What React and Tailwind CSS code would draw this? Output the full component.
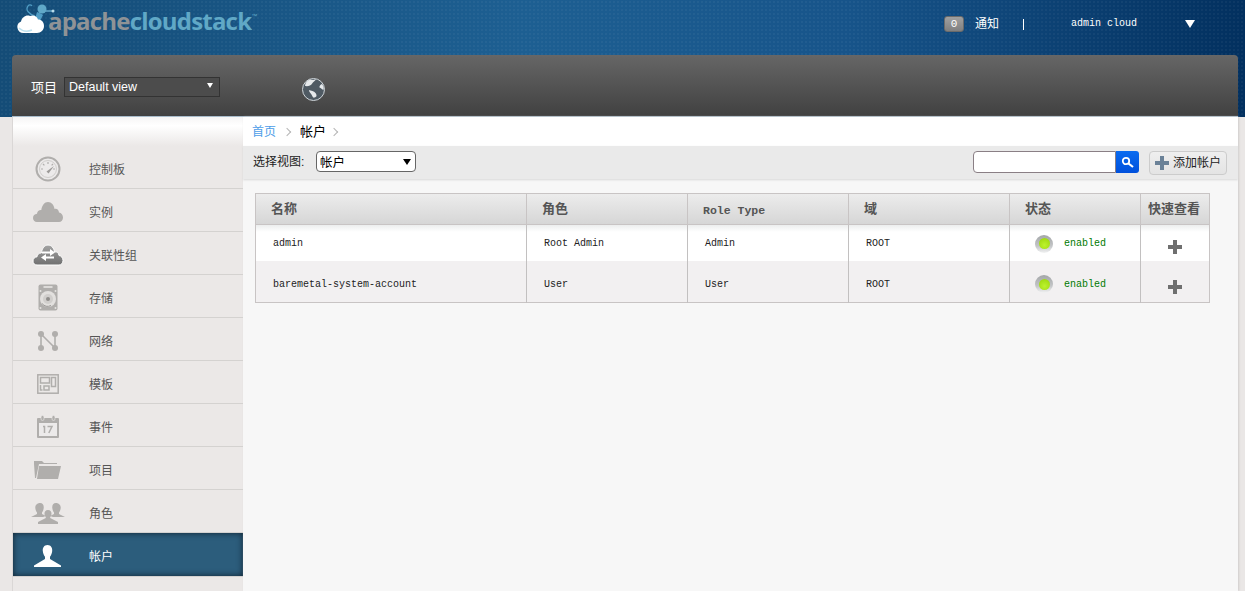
import React from "react";

const G = "#b0aeac";
const Gauge = () => (
  <svg width="26" height="26" viewBox="0 0 26 26">
    <circle cx="13" cy="13" r="11.500" fill="#eceaea" stroke={G} strokeWidth="2" />
    <circle cx="13" cy="13" r="8.500" fill="none" stroke="#d0cecc" strokeWidth="1" />
    <path d="M6 13h2M13 6v2M8 8l1.400 1.400M18 8l-1.400 1.400M20 13h-2" stroke={G} strokeWidth="1.200" />
    <path d="M11.500 15.500L19 10l-5.500 7.500z" fill="#9c9a98" />
  </svg>
);
const CLOUD = "M4 20C1.500 20 0 18.300 0 16c0-2.300 1.700-4 4-4.200C4.200 9.500 6 7.800 8.300 8 9 3.500 11.500 0 15 0c3.500 0 6 3.200 6.500 7 2.300-.8 4.300 1 4.500 3.500 2.400.3 4 2.500 4 5 0 2.500-1.600 4.500-4 4.500z";
const Cloud = () => (
  <svg width="30" height="20" viewBox="0 0 30 20"><path d={CLOUD} fill={G} /></svg>
);
const CloudSwap = () => (
  <svg width="32" height="22" viewBox="-1 -1 32 22">
    <defs>
      <linearGradient id="cs" x1="0" y1="0" x2="0" y2="1">
        <stop offset="0" stopColor="#a4a4a4" />
        <stop offset="1" stopColor="#707070" />
      </linearGradient>
    </defs>
    <path d={CLOUD} fill="url(#cs)" stroke="#fff" strokeWidth="1" />
    <path d="M9 6.500h8V4l5 3.500-5 3.500V8.500H9zM21 11.500h-8V9l-5 3.500 5 3.500v-2.500h8z" fill="#fff" />
  </svg>
);
const Disk = () => (
  <svg width="20" height="27" viewBox="0 0 20 27">
    <rect x="0.500" y="0.500" width="19" height="26" rx="2" fill={G} />
    <rect x="5.500" y="2" width="9" height="2" fill="#dcdad8" />
    <circle cx="2.500" cy="7" r="1" fill="#e4e2e0" /><circle cx="17.500" cy="7" r="1" fill="#e4e2e0" />
    <circle cx="2.500" cy="24" r="1" fill="#e4e2e0" /><circle cx="17.500" cy="24" r="1" fill="#e4e2e0" />
    <circle cx="10" cy="15" r="8" fill="#e2e0de" />
    <circle cx="10" cy="15" r="5" fill="#d0cecc" />
    <circle cx="10" cy="15" r="2" fill="#8f8d8b" />
    <path d="M4 19.500a7.500 7.500 0 0 0 9 2" stroke="#9a9896" fill="none" />
  </svg>
);
const Net = () => (
  <svg width="20" height="20" viewBox="0 0 20 20">
    <path d="M3 3v14M3 3l14 14M17 3v14" stroke={G} strokeWidth="1.600" fill="none" />
    <circle cx="3" cy="3" r="3" fill={G} /><circle cx="17" cy="3" r="3" fill={G} />
    <circle cx="3" cy="17" r="3" fill={G} /><circle cx="17" cy="17" r="3" fill={G} />
  </svg>
);
const Tpl = () => (
  <svg width="22" height="20" viewBox="0 0 22 20" fill="none" stroke={G} strokeWidth="1.500">
    <rect x="0.800" y="0.800" width="20.400" height="18.400" />
    <rect x="3.500" y="3.500" width="9" height="5.500" />
    <rect x="14.500" y="3.500" width="4" height="9" />
    <rect x="7" y="12" width="5" height="4" />
    <path d="M3.500 11v5h2" />
  </svg>
);
const Cal = () => (
  <svg width="22" height="23" viewBox="0 0 22 23">
    <path d="M1 3h20a1 1 0 0 1 1 1v18a1 1 0 0 1-1 1H1a1 1 0 0 1-1-1V4a1 1 0 0 1 1-1z" fill={G} />
    <rect x="2" y="8" width="18" height="13" fill="#eceaea" />
    <rect x="4" y="0.500" width="3" height="5" rx="1.500" fill={G} stroke="#eceaea" strokeWidth="0.600" />
    <rect x="15" y="0.500" width="3" height="5" rx="1.500" fill={G} stroke="#eceaea" strokeWidth="0.600" />
    <path d="M6 11.500h1.500V18M10.500 11.500H15L11.800 18" stroke={G} strokeWidth="1.500" fill="none" />
  </svg>
);
const Folder = () => (
  <svg width="27" height="18" viewBox="0 0 27 18">
    <path d="M0 0h8l2 2h13v1H5L2 17H1L0 3z" fill={G} />
    <path d="M5 5h22l-3 13H3z" fill={G} />
  </svg>
);
const Users = () => (
  <svg width="34" height="22" viewBox="0 0 34 22" fill={G}>
    <path d="M9 1c3 0 4 2.500 3.700 5-.2 2-1 3.500-1.700 4.500V12l4 2-3 1H0l6-3v-1.500C5.300 9.500 4.500 8 4.300 6 4 3.500 6 1 9 1z" />
    <path d="M25 1c3 0 5 2.500 4.700 5-.2 2-1 3.500-1.700 4.500V12l6 3H22l-3-1 4-2v-1.500c-.7-1-1.500-2.500-1.700-4.500C21 3.500 22 1 25 1z" />
    <path d="M17 8c2.500 0 3.700 2 3.500 4-.2 1.500-.8 2.500-1.300 3.200V16l7.800 4v2H7v-2l7.800-4v-.8c-.5-.7-1.100-1.700-1.300-3.200C13.300 10 14.500 8 17 8z" />
  </svg>
);
const User = () => (
  <svg width="27" height="22" viewBox="0 0 27 22" fill="#fff">
    <path d="M13.500 0c3.500 0 5 3 4.700 6-.2 2.500-1.200 4.500-2.200 5.700V14l11 6.500V22H0v-1.500L11 14v-2.300C10 10.500 9 8.500 8.800 6 8.500 3 10 0 13.500 0z" />
  </svg>
);
const Plus = ({ c = "#6f6f6f", s = 14 }) => (
  <svg width={s} height={s} viewBox="0 0 14 14"><path d="M5 0h4v5h5v4H9v5H5V9H0V5h5z" fill={c} /></svg>
);

const items = [
  ["控制板", <Gauge />],
  ["实例", <Cloud />],
  ["关联性组", <CloudSwap />],
  ["存储", <Disk />],
  ["网络", <Net />],
  ["模板", <Tpl />],
  ["事件", <Cal />],
  ["项目", <Folder />],
  ["角色", <Users />],
];

const rows = [
  ["admin", "Root Admin", "Admin"],
  ["baremetal-system-account", "User", "User"],
];

const Dot = () => (
  <span className="w-[18px] h-[18px] rounded-full bg-[linear-gradient(#a3a6a8,#c2c4c6_60%,#f2f3f3)] flex items-center justify-center">
    <span className="w-[11px] h-[11px] rounded-full bg-[radial-gradient(circle_at_50%_65%,#bdf22e,#98d40a)]" />
  </span>
);

const Row = ({ r, cls, h, pt, dotTop, plusTop }) => (
  <tr className={cls + " " + h}>
    <td className={"pl-[17px] border-r border-[#c2c0c0] align-top " + pt}>{r[0]}</td>
    <td className={"pl-[17px] border-r border-[#c2c0c0] align-top " + pt}>{r[1]}</td>
    <td className={"pl-[17px] border-r border-[#c2c0c0] align-top " + pt}>{r[2]}</td>
    <td className={"pl-[17px] border-r border-[#c2c0c0] align-top " + pt}>ROOT</td>
    <td className="border-r border-[#c2c0c0] align-middle">
      <div className={"flex items-center pl-[25px] gap-[11px] text-[#007a00] relative " + dotTop}>
        <Dot />
        <span>enabled</span>
      </div>
    </td>
    <td className="align-middle">
      <div className={"flex justify-center relative " + plusTop}><Plus /></div>
    </td>
  </tr>
);

export default function App() {
  return (
    <div className="w-[1245px] h-[591px] overflow-hidden bg-[#eae7e6] font-['Liberation_Sans','Noto_Sans_CJK_SC',sans-serif]">
      <header className="h-[117px] flex flex-col bg-[radial-gradient(#ffffff0a_1px,transparent_1.500px),linear-gradient(90deg,#144c77_0%,#1d5f92_42%,#17548a_68%,#02305f_100%)] bg-[length:4px_4px,100%_100%]">
        <div className="h-[55px] flex items-start">
          <div className="ml-[17px] mt-[3px] flex items-start">
            <svg width="38" height="31" viewBox="0 0 38 31">
              <path d="M18 13C12 11 8 7 11 3c1-1.500 3-1.500 4 0" stroke="#4f9cc4" strokeWidth="1.300" fill="none" />
              <path d="M28 8l7 0" stroke="#6fb4d4" strokeWidth="1.300" />
              <circle cx="36" cy="8" r="1.500" fill="#b8dcea" />
              <circle cx="25" cy="6" r="4.500" fill="#5fa8c8" />
              <path d="M20 9c3 1 5 2 6 3l-3 6-5-2z" fill="#4f9cc4" />
              <path d="M6.500 30a6 6 0 0 1-2.500-11.500C5 14.500 9 11.500 13 13c3-1.500 7 0 8 3.500 3.500 0 6 2.500 6 6.500s-3 7-7 7z" fill="#ffffff" />
              <path d="M2 25c3 3 8 4 13 2" stroke="#bfe2ef" strokeWidth="1.500" fill="none" />
            </svg>
            <span className="font-['Open_Sans'] font-bold text-[24px] leading-[32px] tracking-[-0.800px] -ml-[7px] mt-[2px] text-[#8f9396]">
              apache<span className="text-[#60a8c6]">cloudstack</span>
            </span>
            <span className="text-[6px] leading-[8px] mt-[9px] text-[#60a8c6]">™</span>
          </div>
          <div className="ml-auto flex items-start mt-[16px] mr-[50px]">
            <span className="w-[20px] h-[16px] rounded-[3px] bg-[linear-gradient(#a0a0a0,#808080)] border border-[#6a6a6a] text-white font-['Liberation_Mono'] text-[11px] leading-[14px] text-center">0</span>
            <span className="ml-[11px] text-[12px] leading-[16px] text-white">通知</span>
            <span className="ml-[24px] mt-[3px] w-px h-[11px] bg-white" />
            <span className="ml-[47px] font-['Liberation_Mono'] text-[10px] leading-[15px] text-white">admin cloud</span>
            <span className="ml-[48px] mt-[4px] w-0 h-0 border-x-[5px] border-x-transparent border-t-[8px] border-t-white" />
          </div>
        </div>
        <div className="h-[62px] ml-[12px] mr-[7px] rounded-t-[4px] bg-[linear-gradient(#666666,#414141)] border-b border-[#a9bccb] flex items-start pt-[22px] pl-[19px]">
          <span className="text-[13px] leading-[22px] text-white w-[33px]">项目</span>
          <div className="w-[156px] h-[20px] border border-[#333] bg-[#4c4c4c] flex items-center pl-[4px] pr-[6px]">
            <span className="text-[12.500px] leading-[20px] text-white">Default view</span>
            <span className="ml-auto -mt-[3px] w-0 h-0 border-x-[3px] border-x-transparent border-t-[5px] border-t-white" />
          </div>
          <span className="ml-[82px] mt-[1px]">
            <svg width="23" height="23" viewBox="0 0 23 23">
              <circle cx="11.500" cy="11.500" r="11" fill="#4f5a63" stroke="#cfd5d9" strokeWidth="1" />
              <path d="M8 1.500c2 1 4 0 6-.3-1 2-3 2.500-4 4.500S6 8.500 3 8c0-3 2-5.500 5-6.500zM20 6c1.500 2 2 4 1.500 6-1.500-.5-2.500-2-4-2.500-.5-1.500 1-3 2.500-3.500zM7 12c2 .5 5 1 6.500 3s1.500 4-1 4.500c-1 .5-2-.500-2.500-2-.5-2-3-3-3-5.500z" fill="#e6e9eb" />
            </svg>
          </span>
        </div>
      </header>

      <div className="flex ml-[12px] mr-[7px] h-[474px]">
        <nav className="w-[231px] shrink-0 bg-[#ebe8e7] border-l border-[#dad7d6] overflow-hidden">
          <div className="h-[29px] bg-[linear-gradient(#f6f5f5,#ffffff_30%,#ebe8e7)]" />
          {items.map(([t, ic]) => (
            <div key={t} className="flex items-center border-b border-[#d4d2d0] h-[43px]">
              <span className="w-[69px] flex justify-center mt-[3px]">{ic}</span>
              <span className="ml-[7px] text-[12px] leading-[16px] text-[#555] mt-[5px]">{t}</span>
            </div>
          ))}
          <div className="h-[43px] flex items-center bg-[#2c5d7c] shadow-[inset_0_0_6px_#10202e]">
            <span className="w-[69px] flex justify-center mt-[3px]"><User /></span>
            <span className="ml-[7px] text-[12px] leading-[16px] text-white mt-[5px]">帐户</span>
          </div>
          <div className="h-[40px] border-t border-[#d4d2d0]">
            <div className="w-[69px] flex justify-center">
              <span className="mt-[14px] w-[16px] h-[16px] rounded-full bg-[#b0aeac]" />
            </div>
          </div>
        </nav>

        <main className="flex-1 min-w-0 bg-[#f7f7f7] shadow-[1px_0_2px_#cfcccb]">
          <div className="h-[29px] bg-white flex items-center pl-[9px] text-[12px] leading-[16px]">
            <span className="text-[#4d9de8]">首页</span>
            <span className="ml-[8px] w-[6px] h-[6px] border-t border-r border-[#b5b5b5] rotate-45" />
            <span className="ml-[10px] text-[13px] text-black">帐户</span>
            <span className="ml-[5px] w-[6px] h-[6px] border-t border-r border-[#b5b5b5] rotate-45" />
          </div>
          <div className="h-[33px] bg-[#eaeaea] shadow-[0_1px_2px_#d8d8d8] flex items-start pl-[10px] pr-[11px] pt-[6px]">
            <span className="text-[12px] leading-[20px] text-[#222] w-[63px]">选择视图:</span>
            <div className="w-[100px] h-[21px] -mt-px rounded-[4px] border border-[#666] bg-white flex items-center pl-[3px] pr-[4px]">
              <span className="text-[12.500px] leading-[20px] text-black relative top-px">帐户</span>
              <span className="ml-auto w-0 h-0 border-x-[4px] border-x-transparent border-t-[6px] border-t-black" />
            </div>
            <div className="ml-auto flex h-[22px] -mt-px">
              <div className="w-[143px] rounded-l-[4px] border border-[#8a7f85] bg-white" />
              <div className="w-[23px] rounded-r-[3px] bg-[linear-gradient(#0a6cf0,#0050dc)] flex items-center justify-center">
                <svg width="13" height="13" viewBox="0 0 13 13">
                  <circle cx="5" cy="5" r="3.200" fill="none" stroke="#fff" strokeWidth="1.800" />
                  <path d="M7.500 7.500L12 11" stroke="#fff" strokeWidth="2.200" />
                </svg>
              </div>
            </div>
            <div className="ml-[10px] w-[78px] h-[24px] -mt-px rounded-[4px] border border-[#cccccc] bg-[linear-gradient(#efefef,#e4e4e4)] flex items-center pl-[5px] gap-[4px]">
              <Plus c="#6b8298" />
              <span className="text-[12px] text-[#222]">添加帐户</span>
            </div>
          </div>

          <div className="pt-[14px] pl-[12px]">
            <table className="w-[955px] table-fixed border-collapse border border-[#c8c4c4] font-['Liberation_Mono','Noto_Sans_CJK_SC',monospace] text-[10px] text-[#222]">
              <colgroup>
                <col className="w-[271px]" /><col className="w-[161px]" /><col className="w-[161px]" /><col className="w-[161px]" /><col className="w-[131px]" /><col />
              </colgroup>
              <thead>
                <tr className="h-[31px] bg-[linear-gradient(#ececec,#d6d6d6)] border-b border-[#c8c4c4] text-left text-[13px] font-bold text-[#555]">
                  <th className="pl-[15px] pt-[1px] border-r border-[#c8c4c4]">名称</th>
                  <th className="pl-[15px] pt-[1px] border-r border-[#c8c4c4]">角色</th>
                  <th className="pl-[15px] pt-[3px] border-r border-[#c8c4c4] text-[11.500px]">Role Type</th>
                  <th className="pl-[15px] pt-[1px] border-r border-[#c8c4c4]">域</th>
                  <th className="pl-[15px] pt-[1px] border-r border-[#c8c4c4]">状态</th>
                  <th className="pt-[1px] pr-[2px] text-center">快速查看</th>
                </tr>
              </thead>
              <tbody>
                <Row r={rows[0]} cls="bg-[linear-gradient(#eceeee,#ffffff_7px)]" h="h-[36px]" pt="pt-[11px]" dotTop="top-[1px]" plusTop="top-[4px]" />
                <Row r={rows[1]} cls="bg-[#f2f0f1]" h="h-[42px]" pt="pt-[16px]" dotTop="top-[3px]" plusTop="top-[6px]" />
              </tbody>
            </table>
          </div>
        </main>
      </div>
    </div>
  );
}
